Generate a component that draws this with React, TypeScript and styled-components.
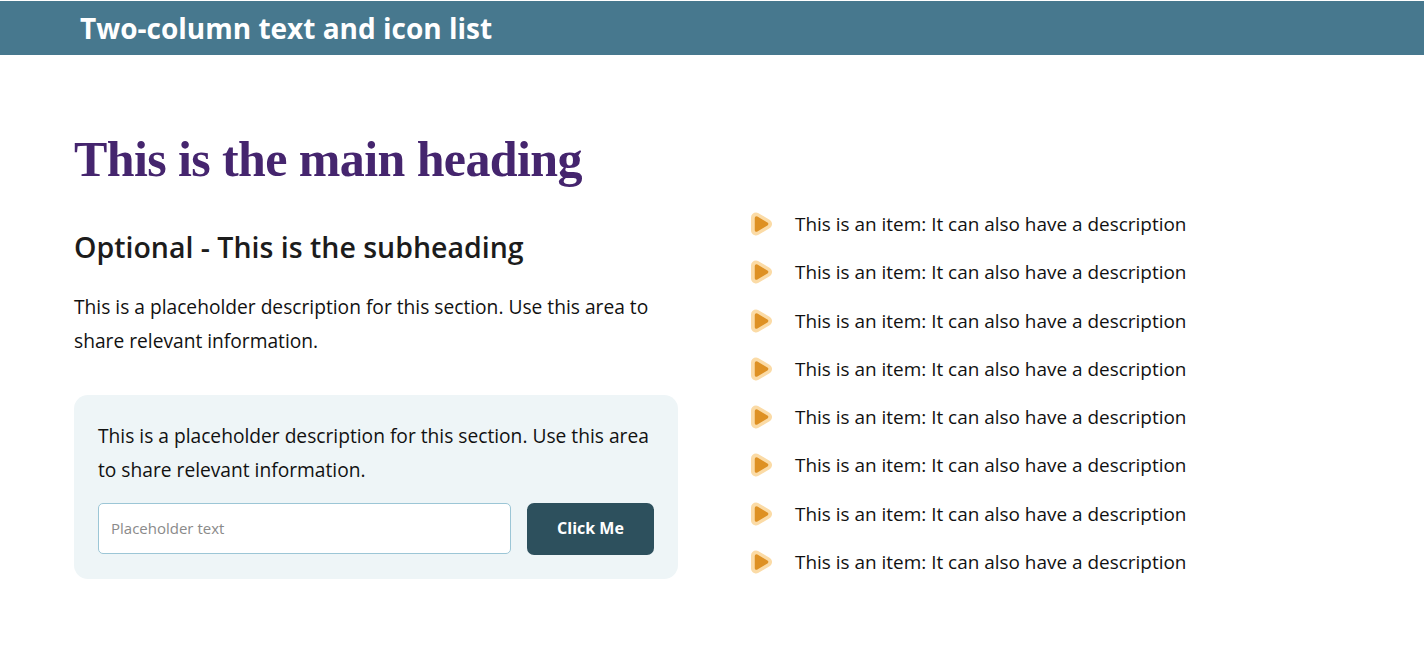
import React from 'react'
import styled, { createGlobalStyle } from 'styled-components'

const GlobalStyle = createGlobalStyle`
    html, body {
        margin: 0;
        padding: 0;
        background: #fff;
        font-family: 'Open Sans', 'Liberation Sans', sans-serif;
    }
`

const items = Array.from({ length: 8 }, () => 'This is an item: It can also have a description')
const description = 'This is a placeholder description for this section. Use this area to share relevant information.'

const PlayIcon = () => (
    <svg width="24" height="26" viewBox="0 0 24 26" aria-hidden="true">
        <path d="M5 6.5 L16 13 L5 19.5 Z" fill="#fbdba6" stroke="#fbdba6" strokeWidth="10" strokeLinejoin="round" />
        <path d="M5.5 7 L15.5 13 L5.5 19 Z" fill="#de9124" stroke="#de9124" strokeWidth="3.5" strokeLinejoin="round" />
    </svg>
)

export default function App() {
    return (
        <Page>
            <GlobalStyle />
            <TopBar>
                <TopBarTitle>Two-column text and icon list</TopBarTitle>
            </TopBar>
            <Columns>
                <LeftColumn>
                    <MainHeading>This is the main heading</MainHeading>
                    <SubHeading>Optional - This is the subheading</SubHeading>
                    <Description>{description}</Description>
                    <FormCard>
                        <Description>{description}</Description>
                        <FormRow>
                            <TextInput placeholder="Placeholder text" />
                            <SubmitButton>Click Me</SubmitButton>
                        </FormRow>
                    </FormCard>
                </LeftColumn>
                <ItemList>
                    {items.map((item, i) => (
                        <Item key={i}>
                            <PlayIcon />
                            <span>{item}</span>
                        </Item>
                    ))}
                </ItemList>
            </Columns>
        </Page>
    )
}

const Page = styled.div`
    width: 1424px;
    height: 660px;
    overflow: hidden;
    padding-top: 1px;
    box-sizing: border-box;
`

const TopBar = styled.div`
    height: 54px;
    background: #47788e;
    padding-left: 80px;
    display: flex;
    align-items: center;
`

const TopBarTitle = styled.div`
    color: #fff;
    font-size: 28px;
    font-weight: 700;
    margin-top: -1px;
`

const Columns = styled.div`
    display: flex;
    padding: 72px 0 0 74px;
`

const LeftColumn = styled.div`
    width: 604px;
`

const MainHeading = styled.h1`
    margin: 0;
    color: #45256e;
    font-family: 'Liberation Serif', serif;
    font-size: 50px;
    font-weight: 700;
    letter-spacing: -0.6px;
    line-height: 64px;
`

const SubHeading = styled.h2`
    margin: 38px 0 0;
    color: #1c1c1c;
    font-size: 28.5px;
    font-weight: 600;
    line-height: 36px;
`

const Description = styled.p`
    margin: 25px 0 0;
    color: #111;
    font-size: 19.2px;
    line-height: 34px;
`

const FormCard = styled.div`
    margin-top: 37px;
    padding: 24px;
    background: #eef5f7;
    border-radius: 14px;

    ${Description} {
        margin: 0;
    }
`

const FormRow = styled.div`
    display: flex;
    align-items: flex-start;
    gap: 16px;
    margin-top: 16px;
`

const TextInput = styled.input`
    flex: 1;
    min-width: 0;
    height: 51px;
    box-sizing: border-box;
    padding: 0 12px 2px;
    background: #fff;
    border: 1px solid #9cc6d6;
    border-radius: 5px;
    font-family: inherit;
    font-size: 15px;

    &::placeholder {
        color: #8a8a8a;
        opacity: 1;
    }
`

const SubmitButton = styled.button`
    width: 127px;
    height: 52px;
    padding: 0 0 2px;
    background: #2d505d;
    color: #fff;
    border: none;
    border-radius: 7px;
    font-family: inherit;
    font-size: 16px;
    font-weight: 700;
`

const ItemList = styled.ul`
    list-style: none;
    margin: 82px 0 0 73px;
    padding: 0;
    display: flex;
    flex-direction: column;
    gap: 18.3px;
`

const Item = styled.li`
    display: flex;
    align-items: center;
    gap: 20px;
    height: 30px;
    color: #111;
    font-size: 18.95px;
`
